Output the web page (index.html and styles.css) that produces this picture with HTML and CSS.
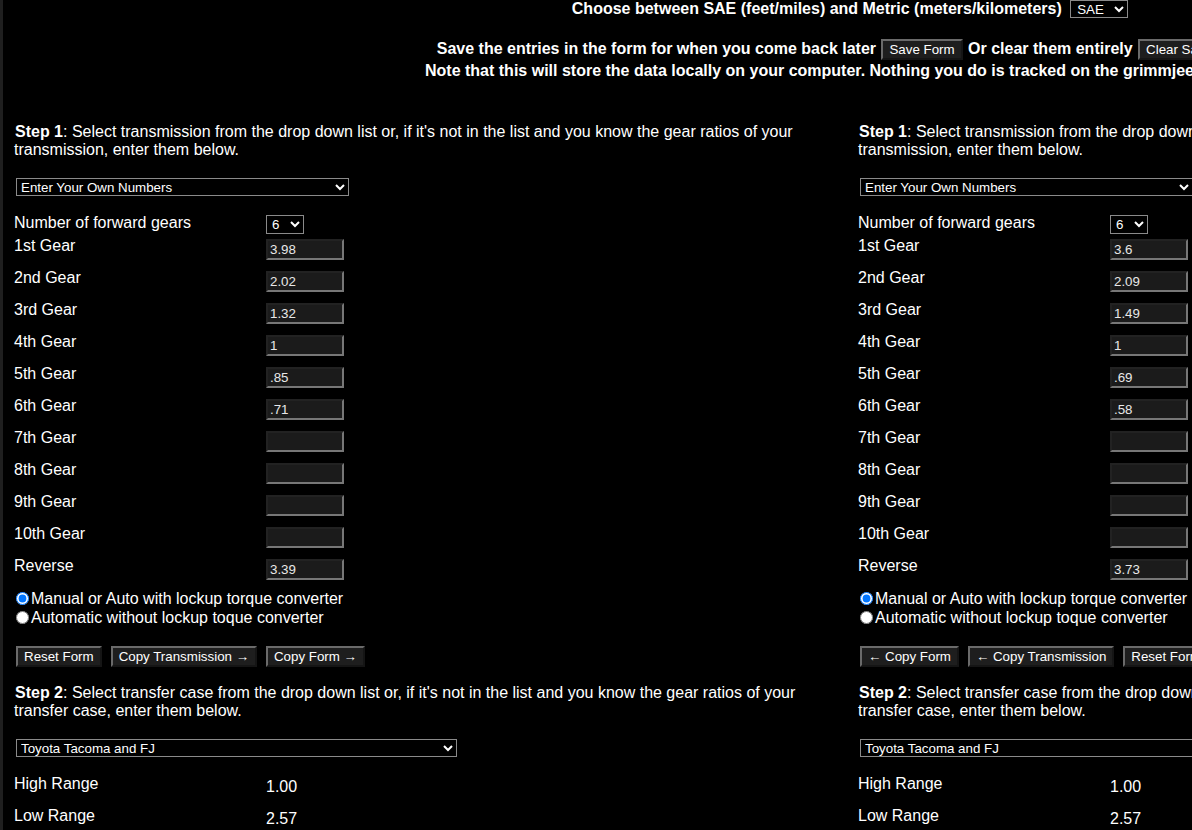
FILE: index.html
```html
<!DOCTYPE html>
<html lang="en">
<head>
  <meta charset="UTF-8" />
  <title>Gear Ratio Comparison</title>
  <link rel="stylesheet" href="styles.css">
</head>
<body>
  <div class="page">
    <div class="top">
      <p class="units">Choose between SAE (feet/miles) and Metric (meters/kilometers)
        <select class="sel-units"><option>SAE</option><option>Metric</option></select>
      </p>
      <p class="save">Save the entries in the form for when you come back later <button>Save Form</button> Or clear them entirely <button>Clear Saved Form</button><br>
        Note that this will store the data locally on your computer. Nothing you do is tracked on the grimmjeeper server.</p>
    </div>

    <div class="columns">
      <!-- Left vehicle -->
      <section class="col">
        <p class="step"><b>Step 1</b>: Select transmission from the drop down list or, if it's not in the list and you know the gear ratios of your transmission, enter them below.</p>
        <select class="sel-trans"><option>Enter Your Own Numbers</option></select>

        <div class="row row-count">
          <span class="lbl">Number of forward gears</span>
          <select class="sel-count"><option>6</option></select>
        </div>
        <div class="row"><span class="lbl">1st Gear</span><input type="text" value="3.98"></div>
        <div class="row"><span class="lbl">2nd Gear</span><input type="text" value="2.02"></div>
        <div class="row"><span class="lbl">3rd Gear</span><input type="text" value="1.32"></div>
        <div class="row"><span class="lbl">4th Gear</span><input type="text" value="1"></div>
        <div class="row"><span class="lbl">5th Gear</span><input type="text" value=".85"></div>
        <div class="row"><span class="lbl">6th Gear</span><input type="text" value=".71"></div>
        <div class="row"><span class="lbl">7th Gear</span><input type="text" value=""></div>
        <div class="row"><span class="lbl">8th Gear</span><input type="text" value=""></div>
        <div class="row"><span class="lbl">9th Gear</span><input type="text" value=""></div>
        <div class="row"><span class="lbl">10th Gear</span><input type="text" value=""></div>
        <div class="row"><span class="lbl">Reverse</span><input type="text" value="3.39"></div>

        <div class="radios">
          <label><input type="radio" name="tc1" checked>Manual or Auto with lockup torque converter</label>
          <label><input type="radio" name="tc1">Automatic without lockup toque converter</label>
        </div>

        <div class="buttons">
          <button>Reset Form</button>
          <button>Copy Transmission &rarr;</button>
          <button>Copy Form &rarr;</button>
        </div>

        <p class="step step2"><b>Step 2</b>: Select transfer case from the drop down list or, if it's not in the list and you know the gear ratios of your transfer case, enter them below.</p>
        <select class="sel-tcase"><option>Toyota Tacoma and FJ</option></select>

        <div class="row range"><span class="lbl">High Range</span><span class="val">1.00</span></div>
        <div class="row range"><span class="lbl">Low Range</span><span class="val">2.57</span></div>
      </section>

      <!-- Right vehicle -->
      <section class="col">
        <p class="step"><b>Step 1</b>: Select transmission from the drop down list or, if it's not in the list and you know the gear ratios of your transmission, enter them below.</p>
        <select class="sel-trans"><option>Enter Your Own Numbers</option></select>

        <div class="row row-count">
          <span class="lbl">Number of forward gears</span>
          <select class="sel-count"><option>6</option></select>
        </div>
        <div class="row"><span class="lbl">1st Gear</span><input type="text" value="3.6"></div>
        <div class="row"><span class="lbl">2nd Gear</span><input type="text" value="2.09"></div>
        <div class="row"><span class="lbl">3rd Gear</span><input type="text" value="1.49"></div>
        <div class="row"><span class="lbl">4th Gear</span><input type="text" value="1"></div>
        <div class="row"><span class="lbl">5th Gear</span><input type="text" value=".69"></div>
        <div class="row"><span class="lbl">6th Gear</span><input type="text" value=".58"></div>
        <div class="row"><span class="lbl">7th Gear</span><input type="text" value=""></div>
        <div class="row"><span class="lbl">8th Gear</span><input type="text" value=""></div>
        <div class="row"><span class="lbl">9th Gear</span><input type="text" value=""></div>
        <div class="row"><span class="lbl">10th Gear</span><input type="text" value=""></div>
        <div class="row"><span class="lbl">Reverse</span><input type="text" value="3.73"></div>

        <div class="radios">
          <label><input type="radio" name="tc2" checked>Manual or Auto with lockup torque converter</label>
          <label><input type="radio" name="tc2">Automatic without lockup toque converter</label>
        </div>

        <div class="buttons">
          <button>&larr; Copy Form</button>
          <button>&larr; Copy Transmission</button>
          <button>Reset Form</button>
        </div>

        <p class="step step2"><b>Step 2</b>: Select transfer case from the drop down list or, if it's not in the list and you know the gear ratios of your transfer case, enter them below.</p>
        <select class="sel-tcase"><option>Toyota Tacoma and FJ</option></select>

        <div class="row range"><span class="lbl">High Range</span><span class="val">1.00</span></div>
        <div class="row range"><span class="lbl">Low Range</span><span class="val">2.57</span></div>
      </section>
    </div>
  </div>
</body>
</html>
```

FILE: styles.css
```css
body {
  margin: 0;
  background: #000;
  color: #fff;
  font-family: "Liberation Sans", Arial, sans-serif;
  font-size: 16px;
  overflow: hidden;
}

.page {
  width: 1694px;
  min-height: 830px;
  border-left: 3px solid #1f1f1f;
}

select, input, button {
  font-family: "Liberation Sans", Arial, sans-serif;
  font-size: 13.33px;
  color: #fff;
}

select {
  background: #000;
  border: 1px solid #8a8a8a;
  border-radius: 0;
  padding: 0;
  margin: 0;
}

button {
  background: #1e1e1e;
  border: 2px outset #6a6a6a;
  padding: 1px 6px;
  margin: 0;
}

/* Header */
.top {
  text-align: center;
  font-weight: bold;
}

.units {
  margin: 0 0 19px;
  height: 19px;
  line-height: 18px;
}

.sel-units {
  width: 58px;
  height: 18px;
  margin-left: 4px;
  padding-left: 2px;
  vertical-align: top;
  font-weight: normal;
}

.save {
  margin: 0 0 42px;
  line-height: 21px;
}

.save button {
  font-weight: normal;
  margin: 0 1px;
}

/* Columns */
.columns {
  display: flex;
}

.col {
  width: 844px;
  flex: none;
  padding-left: 11px;
  box-sizing: border-box;
}

.step {
  margin: 0;
  line-height: 18px;
}

.step b {
  margin-left: 1px;
}

.sel-trans {
  display: block;
  width: 333px;
  height: 18px;
  margin: 19px 0 0 2px;
}

.row {
  display: flex;
  align-items: flex-start;
  height: 32px;
  line-height: 18px;
}

.lbl {
  width: 252px;
  flex: none;
}

.row input {
  width: 78px;
  height: 21px;
  box-sizing: border-box;
  margin-top: 2px;
  padding: 1px 2px;
  background: #1b1b1b;
  border: 2px inset #777;
  color: #e8e8e8;
}

.row-count {
  height: 23px;
  margin-top: 18px;
}

.sel-count {
  width: 38px;
  height: 19px;
  margin-top: 1px;
  padding-left: 1px;
}

.radios label {
  display: flex;
  align-items: center;
  height: 19px;
}

.radios input {
  width: 13px;
  height: 13px;
  margin: 0 2px 0 2px;
}

.buttons {
  display: flex;
  gap: 9px;
  margin: 19px 0 0 2px;
}

.buttons button {
  height: 21px;
}

.step2 {
  margin-top: 17px;
}

.sel-tcase {
  display: block;
  width: 441px;
  height: 18px;
  margin: 19px 0 0 2px;
}

.sel-tcase + .range {
  margin-top: 18px;
}

.val {
  padding-top: 3px;
}
```
